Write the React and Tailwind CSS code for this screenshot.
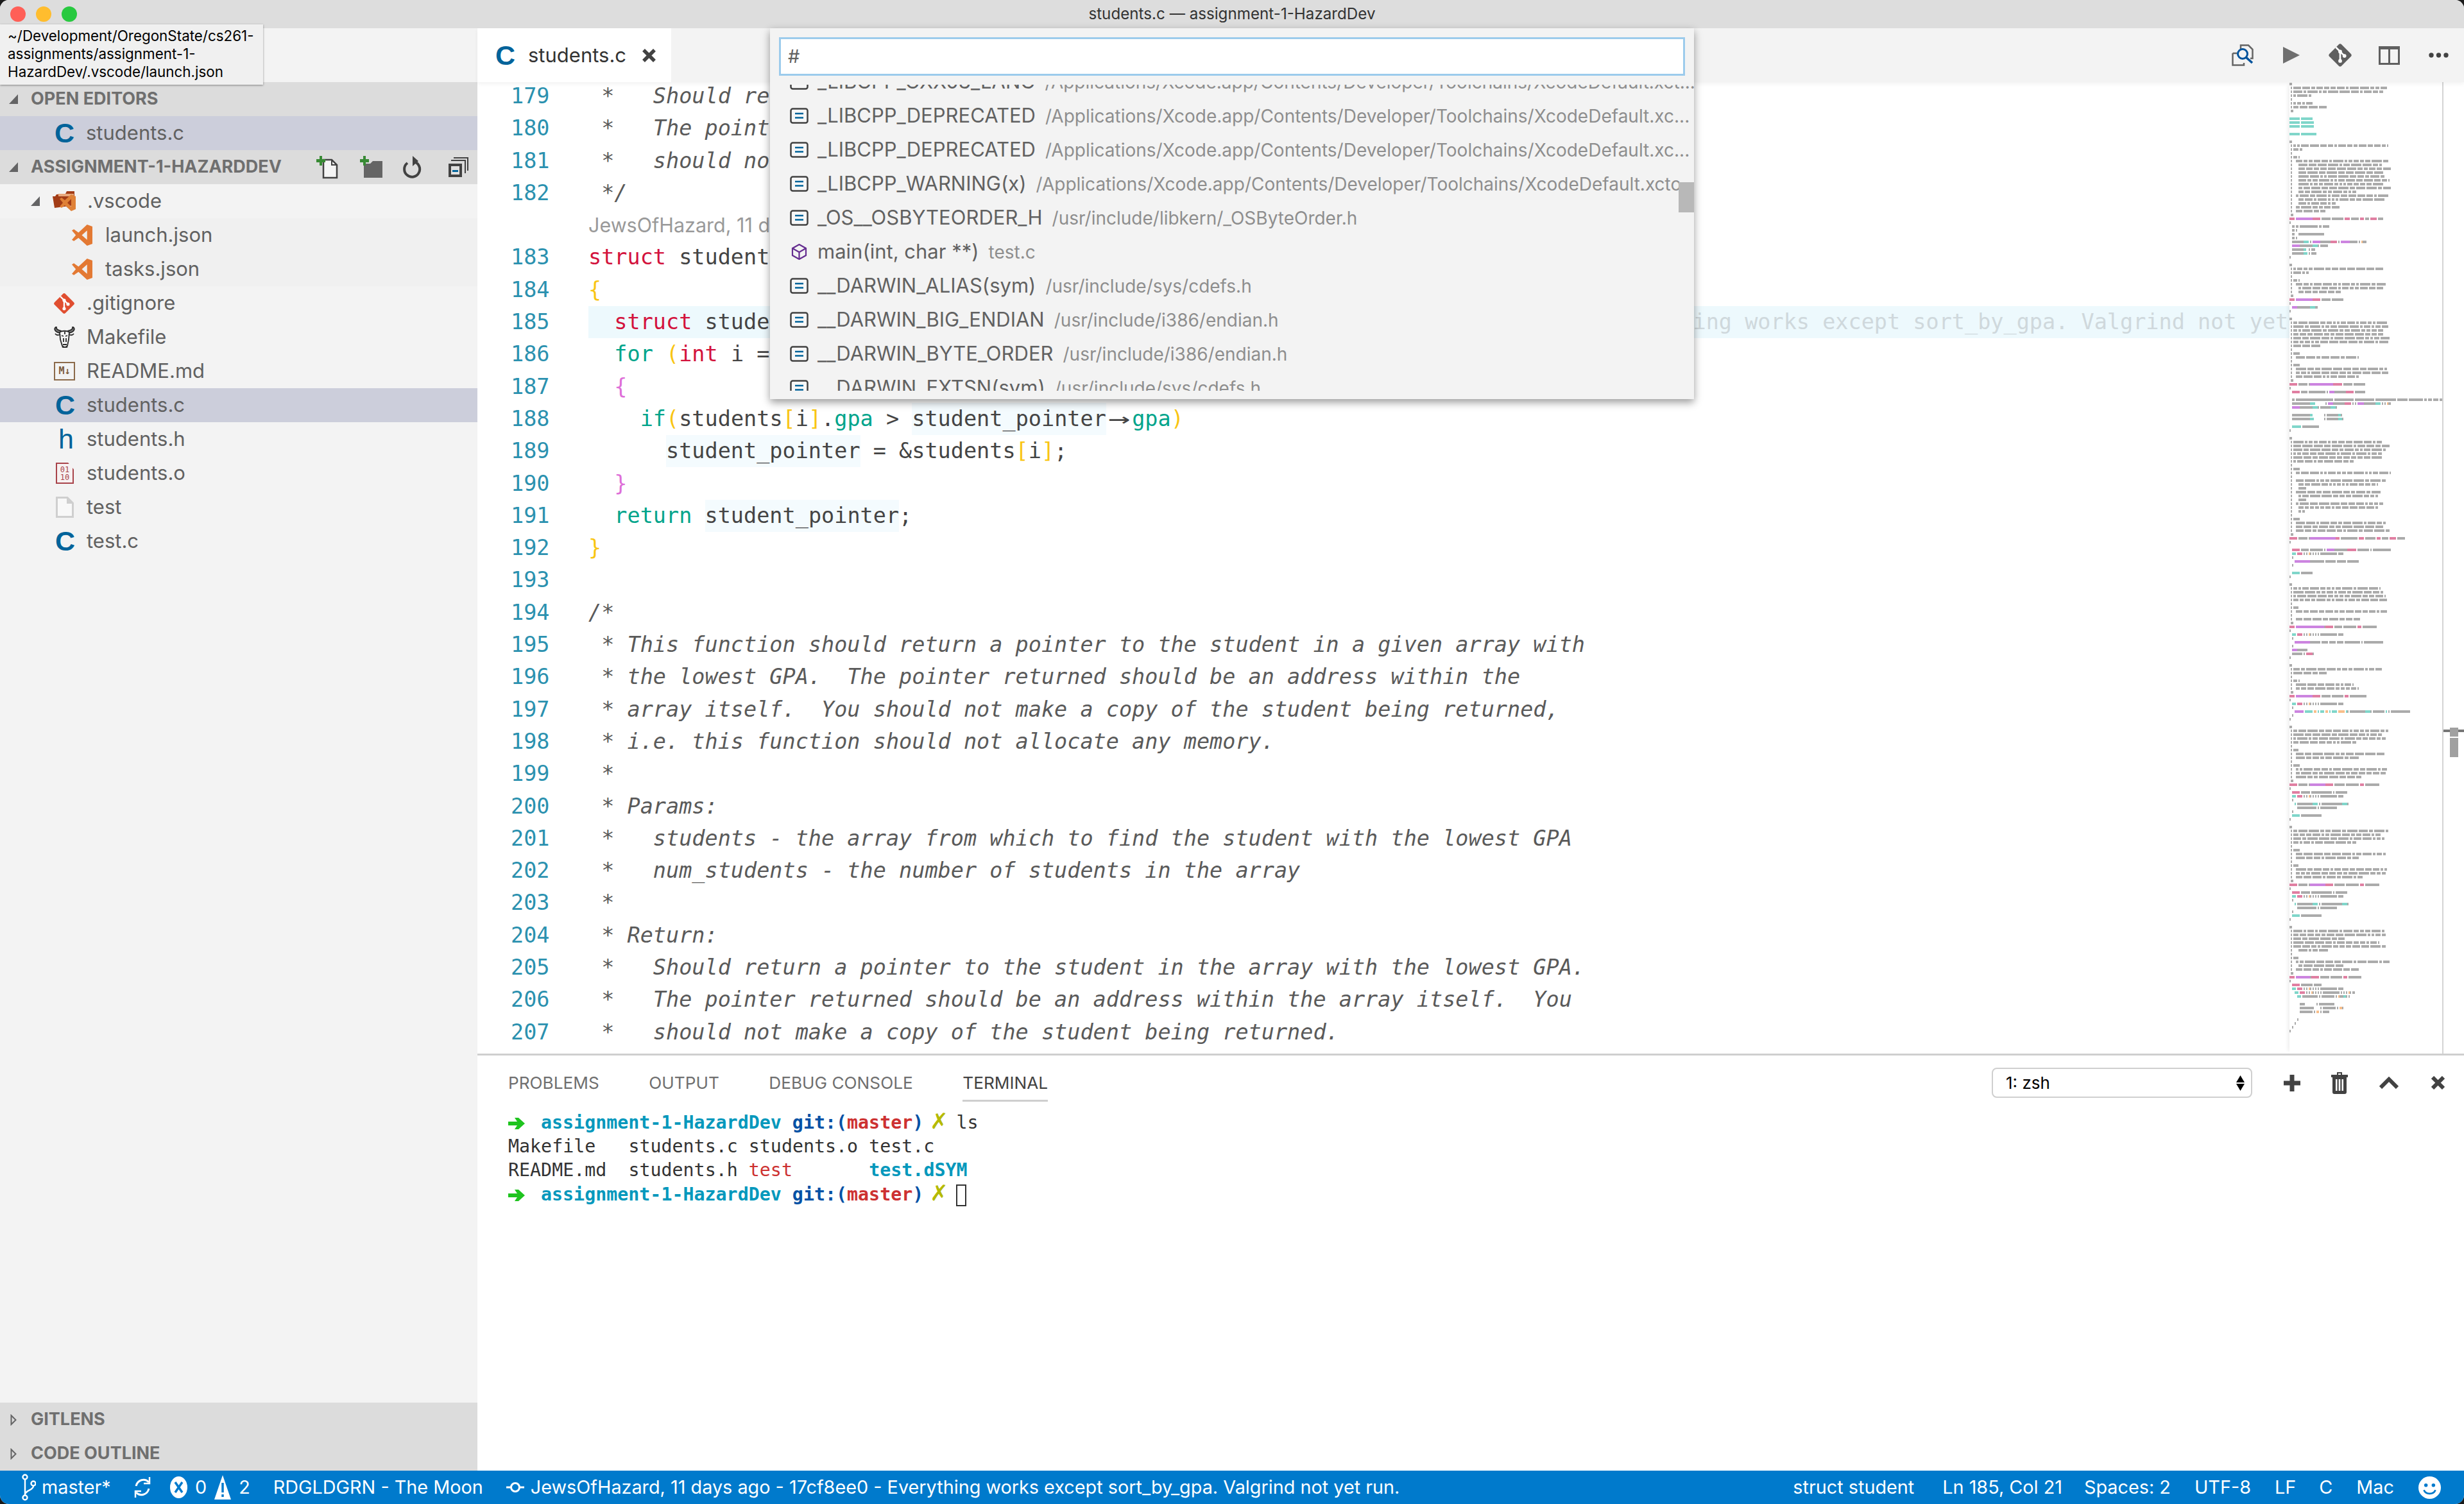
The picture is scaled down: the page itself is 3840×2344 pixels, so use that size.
import React from 'react';

const FORL = '  ttt kkkk # # o# # # # ############# ####';

// minimap rows: # plain, k f t o coloured, cN comment line, cI:N indented comment line
const MINI = [
  '##','c77','c73','c17',' #','c18','c30',' ##','',
  'tttttttt ttttttttt','tttttttt tttttttttt','tttttttt tttttttttt','','tttttttt tttttttttttt','',
  '##','c77','c11',' #','c8','c5:77','c7:72','c7:79','c7:73','c7:74','c7:78','c7:74','c7:79','c7:52','c5:77','c7:75','c7:36','c5:39','c5:28',' ##',
  'kkkk fffffffffffffkkkkkk ####### ######### kkkk ###### kkk ### kkkkk ####','#',
  '  ## ## ############## ## #####','  ## #','  ##   ####################','  ## #',
  '  #########tttt # ffffff########kkkkk # fffffff###### # o###','  ffffff##########tttt# ######','  #########tt  # ###','  #########ttt # ####','#','',
  '##','c73','c16',' #','c8','c5:75','c7:73','c7:40',' ##',
  'kkkk fffffffffffffkkkkkk ####### #########','#','  ffff##########tttt##','#','',
  '##','c77','c78','c73','c74','c79','c78','c24',' #','c8','c5:54',' #','c8','c5:77','c5:77','c5:54',' ##',
  'kkkkkk ####### #ffffffffffffffffffkkkkkkk ####### #########','#',
  '  kkkkkk ##### ############# # ffff#########kkkkkk ########','',
  '  ## ############################# ############### ############### ################ ######## ########### ## ### #### ##### ######',
  '  ##############tttt        # ffff#########kkkkk # # fffff#########tttt # # o##',
  '  ffffff##########tttt# ########tttt#','',
  '  ##############tt         # #########tt#','  ##############ttt        # #########ttt#','',
  '  ttttttt #############','#','',
  '##','c72','c78','c75','c72','c73','c50',' #','c8','c5:79','c7:7','c5:75','c7:69','c7:13','c5:71','c7:69','c7:13','c5:73','c7:69','c7:13',' #','c8','c5:75','c5:73','c5:78',' ##',
  'kkkkkk ####### #ffffffffffffffffffffkkk ############# kkkk ######## kkk ##### kkkkk ######','#','',
  '  kkkkkk ###### ########## # ffffff##########kkkkkkk ######### # ##############',FORL,'  #',
  '    ffffffffffff########### ######## ####### #########','  #','',
  '  tttttt #########','#','',
  '##','c71','c73','c75','c76',' #','c8','c5:76','c7:7','c5:55',' ##',
  'kkkk ffffffffffffffffffffff#kkkkkk ###### ########## kkk ###########','#',FORL,'  #',
  '    ffffffffffff######## ##### ##### ##### ############ # ###############','  #',
  '  ffff########','  ######## # kkkkk#','#','',
  '##','c73','c30',' #','c8','c5:50','c5:54',' ##',
  'kkkk fffffffffffffkkkkkk ####### ######### kkk #############','#',FORL,'  #',
  '    fffffff tttttt oo t ttt oo t tttt ooooo t# ############tttt# ######### t # ###############','  #','#','',
  '##','c77','c72','c75','c52',' #','c8','c5:75','c5:54',' #','c8','c5:76','c5:75','c5:57',' ##',
  'kkkkkk ####### #ffffffffffffkkkkkk ######## ########## kkk ###########','#',
  '  kkkkkk ####### ################ # #########',FORL,'  #',
  '    t ############tttt # ################tttt#','      ############### # #############','  #','  tttttt ################','#','',
  '##','c77','c71','c75','c52',' #','c8','c5:75','c5:54',' #','c8','c5:76','c5:75','c5:57',' ##',
  'kkkkkk ####### #ffffffffffffkkkkkk ######## ########## kkk ###########','#',
  '  kkkkkk ####### ################ # #########',FORL,'  #',
  '    t ############tttt # ################tttt#','      ############### # #############','  #','  tttttt ################','#','',
  '##','c74','c75','c43','c3:70','c3:75','c7:30',' #','c8','c5:78','c7:43','c5:55',' ##',
  'kkkk fffffffffff#kkkkkk ####### ######### kkk ##########','#',
  '  kkkkkk ######### ######',FORL,'    ttt kkkk # # o# # # # ############# # # # o# ##',
  '      ttt ############ # ########## # o###tt# #','',
  '        ####         # ############','        ###########     # ########## # oo#','        ########## # oo # #####','',
  '      #','    #','  #','#',
];

const MINI_COLORS = { '#': '#ababab', k: '#e07fa2', f: '#cc84e0', t: '#80d6ca', o: '#f8bf8b' };

function expandComment(spec, index) {
  const m = spec.match(/^c(?:(\d+):)?(\d+)$/);
  if (!m) return spec;
  const start = m[1] ? Number(m[1]) : 3;
  const len = Number(m[2]);
  let seed = index * 7919 + 17;
  let out = ' #'.padEnd(start, ' ');
  while (out.length < len) {
    seed = (seed * 1103515245 + 12345) & 0x7fffffff;
    const word = 2 + ((seed >> 8) % 7);
    out += '#'.repeat(word) + ' ';
  }
  return out.slice(0, len);
}

function Minimap() {
  const rects = [];
  MINI.forEach((spec, row) => {
    const line = expandComment(spec, row);
    let i = 0;
    while (i < line.length) {
      const ch = line[i];
      let j = i + 1;
      while (j < line.length && line[j] === ch) j++;
      if (ch !== ' ') {
        rects.push(<rect key={row + '-' + i} x={i * 2} y={row * 6 + 1} width={(j - i) * 2} height={4} fill={MINI_COLORS[ch]} />);
      }
      i = j;
    }
  });
  return (
    <svg className="block" width="238" height="1514" viewBox="0 0 238 1514">
      {rects}
    </svg>
  );
}

function CIcon({ className = '' }) {
  return <span className={`font-['Liberation_Sans'] font-bold text-[43px] leading-none text-[#00639a] w-[30px] text-center ${className}`}>C</span>;
}

function VsIcon({ className = 'w-[33px] h-[33px]' }) {
  return (
    <svg className={className} viewBox="0 0 32 32" fill="#e37933">
      <path fillRule="evenodd" d="M23 0 L31 3 V29 L23 32 L10 20 L3 25 L0 23 L6 16 L0 9 L3 7 L10 12 Z M23 9 L15 16 L23 23 Z" />
    </svg>
  );
}

function FolderVs() {
  return (
    <svg className="w-[37px] h-[31px]" viewBox="0 0 37 31">
      <path d="M0 8 L4 8 L6 5 L20 4 L22 0 L34 0 V22 L3 26 Z" fill="#a23c16" />
      <path d="M9 4 H33 V8 H9 Z" fill="#e8a87c" />
      <path fillRule="evenodd" d="M29 5 L36 8 V28 L29 31 L19 22 L14 26 L11 24 L16 18 L11 12 L14 10 L19 14 Z M29 12 L23 18 L29 24 Z" fill="#df8137" />
    </svg>
  );
}

function GitIcon({ color = '#e04e30', className = 'w-[34px] h-[34px]' }) {
  return (
    <svg className={className} viewBox="0 0 34 34">
      <rect x="5" y="5" width="24" height="24" rx="3" transform="rotate(45 17 17)" fill={color} />
      <path d="M11 6 L17 12 M17 12 V25 M17 12 L23 18" stroke="#fff" strokeWidth="2.4" fill="none" />
      <circle cx="17" cy="12" r="2.6" fill="#fff" />
      <circle cx="17" cy="25" r="2.6" fill="#fff" />
      <circle cx="23" cy="18" r="2.6" fill="#fff" />
    </svg>
  );
}

function GnuIcon() {
  return (
    <svg className="w-[33px] h-[33px]" viewBox="0 0 33 33" fill="none" stroke="#2b2b2b" strokeWidth="1.8">
      <path d="M9 10 C1 8 -1 3 4 0 C3 5 8 6 12 7" fill="#777" />
      <path d="M24 10 C32 8 34 3 29 0 C30 5 25 6 21 7" fill="#777" />
      <path d="M9 9 C12 6 21 6 24 9 L23 20 L21 30 C19 33 15 33 13 30 L10 20 Z" fill="#f4f4f4" />
      <path d="M12 14 L15 15 M21 14 L18 15 M14 28 H20 M15 18 V24 M19 18 V24 M17 8 V12" />
      <path d="M2 11 C5 15 8 13 10 12 M31 11 C28 15 25 13 23 12" />
      <path d="M13 31 L17 33 L21 31" strokeWidth="2.6" />
    </svg>
  );
}

function MdIcon() {
  return (
    <div className="w-[33px] h-[29px] border-2 border-[#8b6a4a] flex items-center justify-center font-['DejaVu_Sans_Mono'] font-bold text-[15px] text-[#7a5c3c] leading-none">
      M↓
    </div>
  );
}

function BinIcon() {
  return (
    <div className="relative w-[28px] h-[33px] border-2 border-[#a8434a] bg-[#f7f1f1] flex flex-col items-center justify-center font-['DejaVu_Sans_Mono'] text-[12px] text-[#a8434a] leading-[12px] [clip-path:polygon(0_0,68%_0,100%_32%,100%_100%,0_100%)]">
      <span>01</span>
      <span>10</span>
    </div>
  );
}

function PlainFile() {
  return (
    <svg className="w-[28px] h-[33px]" viewBox="0 0 28 33">
      <path d="M1.5 1.5 H18 L26.5 10 V31.5 H1.5 Z" fill="#f8f8f8" stroke="#cfcfcf" strokeWidth="3" />
      <path d="M18 1.5 V10 H26.5" fill="#cfcfcf" stroke="#cfcfcf" strokeWidth="2" />
    </svg>
  );
}

function Twist({ open = true }) {
  if (!open) {
    return (
      <svg className="w-[10px] h-[18px]" viewBox="0 0 10 18">
        <path d="M1.5 2 L8.5 9 L1.5 16 Z" fill="#dcdcdc" stroke="#646465" strokeWidth="2" />
      </svg>
    );
  }
  return (
    <svg className="w-[14px] h-[15px]" viewBox="0 0 14 15">
      <path d="M14 0 V15 H0 Z" fill="#646465" />
    </svg>
  );
}

function NewFileIcon() {
  return (
    <svg className="w-[36px] h-[36px]" viewBox="0 0 36 36">
      <path d="M12 6 H25 L33 14 V34 H12 Z" fill="#f5f5f5" stroke="#424242" strokeWidth="2.5" />
      <path d="M25 6 V14 H33" fill="none" stroke="#424242" strokeWidth="2" />
      <path d="M6 0 H10 V5 H15 V10 H10 V15 H6 V10 H1 V5 H6 Z" fill="#388a34" />
    </svg>
  );
}

function NewFolderIcon() {
  return (
    <svg className="w-[36px] h-[36px]" viewBox="0 0 36 36">
      <path d="M7 12 H17 L21 8 H36 V34 H7 Z" fill="#656565" />
      <path d="M6 0 H10 V5 H15 V10 H10 V15 H6 V10 H1 V5 H6 Z" fill="#388a34" />
    </svg>
  );
}

function RefreshIcon() {
  return (
    <svg className="w-[30px] h-[36px]" viewBox="0 0 30 36">
      <path d="M17 9 A12 12 0 1 1 7 11" fill="none" stroke="#424242" strokeWidth="4" />
      <path d="M15 0 L24 8 L15 16 Z" fill="#424242" />
    </svg>
  );
}

function CollapseIcon() {
  return (
    <svg className="w-[32px] h-[32px]" viewBox="0 0 32 32" fill="none">
      <path d="M9 1 H31 V21 M5 5 H27 V25" stroke="#424242" strokeWidth="2" />
      <rect x="1" y="10" width="21" height="21" fill="#424242" />
      <rect x="5" y="14" width="13" height="13" fill="#e0e0e0" />
      <rect x="7" y="20" width="9" height="3" fill="#00639a" />
    </svg>
  );
}

function SymbolIcon() {
  return (
    <svg className="w-[29px] h-[25px] shrink-0" viewBox="0 0 29 25" fill="none">
      <rect x="1.5" y="1.5" width="26" height="22" rx="3" stroke="#424242" strokeWidth="2.5" fill="#f7f7f7" />
      <path d="M8 9 H21 M8 15.5 H21" stroke="#00639a" strokeWidth="2.5" />
    </svg>
  );
}

function CubeIcon() {
  return (
    <svg className="w-[25px] h-[25px] ml-[2px] mr-[2px] shrink-0" viewBox="0 0 25 25" fill="none" stroke="#652d90" strokeWidth="2.2">
      <path d="M12.5 1 L23 7 V18 L12.5 24 L2 18 V7 Z" />
      <path d="M2 7 L12.5 13 L23 7 M12.5 13 V24" />
    </svg>
  );
}

function Comment({ children }) {
  return <span className="italic text-[#5a5a5a]">{children}</span>;
}

const RED = 'text-[#d3123c]';
const TEAL = 'text-[#00a48b]';
const YEL = 'text-[#f9c513]';
const PINK = 'text-[#de6fd8]';
const PLAIN = 'text-[#444444]';
const WORD = 'bg-[#f4fbfe] inline-block h-[50px] leading-[50px]';

const CODE = [
  { n: 179, c: <Comment>{' *   Should return a pointer to the student in the array with the lowest GPA.'}</Comment> },
  { n: 180, c: <Comment>{' *   The pointer returned should be an address within the array itself.'}</Comment> },
  { n: 181, c: <Comment>{' *   should not make a copy of the student being returned.'}</Comment> },
  { n: 182, c: <Comment>{' */'}</Comment> },
  { n: '', c: <span className="font-['Inter'] text-[30.5px] text-[#999999]">JewsOfHazard, 11 days ago | 1 author (JewsOfHazard)</span> },
  { n: 183, c: <span className={PLAIN}><span className={RED}>struct</span> student* find_student_by_gpa(struct student* students, int num)</span> },
  { n: 184, c: <span className={YEL}>{'{'}</span> },
  {
    n: 185,
    hl: true,
    c: (
      <span className={PLAIN}>
        {'  '}
        <span className={RED}>struct</span> student* student_pointer = &amp;students[0];
        <span className="ml-[592px] text-[#cfd8dc]">Everything works except sort_by_gpa. Valgrind not yet run.</span>
      </span>
    ),
  },
  { n: 186, c: <span className={PLAIN}>{'  '}<span className={TEAL}>for</span> <span className={YEL}>(</span><span className={RED}>int</span> i = 0; i &lt; num_students; i++<span className={YEL}>)</span></span> },
  { n: 187, c: <span className={PINK}>{'  {'}</span> },
  {
    n: 188,
    c: (
      <span className={PLAIN}>
        {'    '}
        <span className={TEAL}>if</span><span className={YEL}>(</span>students<span className={YEL}>[</span>i<span className={YEL}>]</span>.<span className={TEAL}>gpa</span> &gt; <span className={WORD}>student_pointer</span>
        <span className="inline-block w-[2ch] text-center scale-x-[1.7]">→</span><span className={TEAL}>gpa</span><span className={YEL}>)</span>
      </span>
    ),
  },
  { n: 189, c: <span className={PLAIN}>{'      '}<span className={WORD}>student_pointer</span> = &amp;students<span className={YEL}>[</span>i<span className={YEL}>]</span>;</span> },
  { n: 190, c: <span className={PINK}>{'  }'}</span> },
  { n: 191, c: <span className={PLAIN}>{'  '}<span className={TEAL}>return</span> <span className={WORD}>student_pointer</span>;</span> },
  { n: 192, c: <span className={YEL}>{'}'}</span> },
  { n: 193, c: '' },
  { n: 194, c: <Comment>{'/*'}</Comment> },
  { n: 195, c: <Comment>{' * This function should return a pointer to the student in a given array with'}</Comment> },
  { n: 196, c: <Comment>{' * the lowest GPA.  The pointer returned should be an address within the'}</Comment> },
  { n: 197, c: <Comment>{' * array itself.  You should not make a copy of the student being returned,'}</Comment> },
  { n: 198, c: <Comment>{' * i.e. this function should not allocate any memory.'}</Comment> },
  { n: 199, c: <Comment>{' *'}</Comment> },
  { n: 200, c: <Comment>{' * Params:'}</Comment> },
  { n: 201, c: <Comment>{' *   students - the array from which to find the student with the lowest GPA'}</Comment> },
  { n: 202, c: <Comment>{' *   num_students - the number of students in the array'}</Comment> },
  { n: 203, c: <Comment>{' *'}</Comment> },
  { n: 204, c: <Comment>{' * Return:'}</Comment> },
  { n: 205, c: <Comment>{' *   Should return a pointer to the student in the array with the lowest GPA.'}</Comment> },
  { n: 206, c: <Comment>{' *   The pointer returned should be an address within the array itself.  You'}</Comment> },
  { n: 207, c: <Comment>{' *   should not make a copy of the student being returned.'}</Comment> },
];

const XCODE = '/Applications/Xcode.app/Contents/Developer/Toolchains/XcodeDefault.';
const PICKS = [
  { label: '_LIBCPP_CXX03_LANG', desc: XCODE + 'xct...' },
  { label: '_LIBCPP_DEPRECATED', desc: XCODE + 'xc...' },
  { label: '_LIBCPP_DEPRECATED', desc: XCODE + 'xc...' },
  { label: '_LIBCPP_WARNING(x)', desc: XCODE + 'xcto...' },
  { label: '_OS__OSBYTEORDER_H', desc: '/usr/include/libkern/_OSByteOrder.h' },
  { label: 'main(int, char **)', desc: 'test.c', fn: true },
  { label: '__DARWIN_ALIAS(sym)', desc: '/usr/include/sys/cdefs.h' },
  { label: '__DARWIN_BIG_ENDIAN', desc: '/usr/include/i386/endian.h' },
  { label: '__DARWIN_BYTE_ORDER', desc: '/usr/include/i386/endian.h' },
  { label: '__DARWIN_EXTSN(sym)', desc: '/usr/include/sys/cdefs.h' },
];

function SideHeader({ open = true, children, right }) {
  return (
    <div className="h-[53px] bg-[#dcdcdc] flex items-center shrink-0">
      <div className="w-[48px] flex justify-center pr-[6px]">
        <Twist open={open} />
      </div>
      <span className="text-[27px] font-bold text-[#6f6f6f]">{children}</span>
      {right}
    </div>
  );
}

function TreeRow({ icon, label, indent = 85, labelX = 134, active, tint }) {
  return (
    <div className={`h-[53px] flex items-center text-[31px] text-[#616161] ${active ? 'bg-[#cccedb]' : tint ? 'bg-[#f0f0f0]' : ''}`}>
      <div className="shrink-0 flex items-center" style={{ width: labelX, paddingLeft: indent }}>
        {icon}
      </div>
      <span>{label}</span>
    </div>
  );
}

function Sidebar() {
  return (
    <div className="w-[744px] shrink-0 flex flex-col bg-[#f3f3f3]">
      <div className="h-[84px] shrink-0" />
      <SideHeader>OPEN EDITORS</SideHeader>
      <TreeRow active icon={<CIcon />} label="students.c" />
      <SideHeader
        right={
          <div className="ml-[53px] flex items-center">
            <NewFileIcon />
            <div className="ml-[32px]"><NewFolderIcon /></div>
            <div className="ml-[32px]"><RefreshIcon /></div>
            <div className="ml-[40px]"><CollapseIcon /></div>
          </div>
        }
      >
        ASSIGNMENT-1-HAZARDDEV
      </SideHeader>
      <div className="h-[53px] flex items-center text-[31px] text-[#616161]">
        <div className="ml-[48px] w-[34px]"><Twist /></div>
        <FolderVs />
        <span className="ml-[17px]">.vscode</span>
      </div>
      <TreeRow tint icon={<VsIcon />} label="launch.json" indent={112} labelX={164} />
      <TreeRow tint icon={<VsIcon />} label="tasks.json" indent={112} labelX={164} />
      <TreeRow icon={<GitIcon />} label=".gitignore" indent={83} labelX={135} />
      <TreeRow icon={<GnuIcon />} label="Makefile" indent={84} labelX={135} />
      <TreeRow icon={<MdIcon />} label="README.md" indent={84} labelX={135} />
      <TreeRow active icon={<CIcon />} label="students.c" indent={86} labelX={135} />
      <TreeRow
        icon={<span className="font-['Liberation_Sans'] text-[43px] leading-none text-[#00639a] pl-[5px]">h</span>}
        label="students.h"
        indent={86}
        labelX={135}
      />
      <TreeRow icon={<BinIcon />} label="students.o" indent={87} labelX={135} />
      <TreeRow icon={<PlainFile />} label="test" indent={87} labelX={135} />
      <TreeRow icon={<CIcon />} label="test.c" indent={86} labelX={135} />
      <div className="flex-1" />
      <SideHeader open={false}>GITLENS</SideHeader>
      <SideHeader open={false}>CODE OUTLINE</SideHeader>
    </div>
  );
}

function TabActions() {
  return (
    <div className="flex items-center pr-[24px]">
      <svg className="w-[34px] h-[34px]" viewBox="0 0 34 34" fill="none">
        <path d="M1.5 14 H8 M1.5 14 V32.5 H19 V29 M14 9 V1.5 H26 L32.5 8 V22 H29" stroke="#656565" strokeWidth="2.5" />
        <circle cx="17" cy="15" r="7.5" stroke="#00539c" strokeWidth="3" fill="#f3f3f3" />
        <path d="M22 20 L32 29" stroke="#00539c" strokeWidth="3.5" />
      </svg>
      <svg className="ml-[45px] w-[28px] h-[28px]" viewBox="0 0 28 28">
        <path d="M1 1 L27 14 L1 27 Z" fill="#6f6f6f" />
      </svg>
      <div className="ml-[43px]"><GitIcon color="#5f5f5f" className="w-[38px] h-[38px]" /></div>
      <svg className="ml-[41px] w-[33px] h-[29px]" viewBox="0 0 33 29">
        <rect width="33" height="29" fill="#5f5f5f" />
        <rect x="3" y="5" width="12" height="21" fill="#f3f3f3" />
        <rect x="18" y="5" width="12" height="21" fill="#f3f3f3" />
      </svg>
      <svg className="ml-[45px] w-[31px] h-[8px]" viewBox="0 0 31 8" fill="#424242">
        <circle cx="4" cy="4" r="3.7" />
        <circle cx="15.5" cy="4" r="3.7" />
        <circle cx="27" cy="4" r="3.7" />
      </svg>
    </div>
  );
}

function Editor() {
  return (
    <div className="flex-1 min-h-0 flex overflow-hidden relative">
      <div className="w-[2824px] shrink-0 overflow-hidden font-['DejaVu_Sans_Mono'] text-[33.5px] whitespace-pre">
        <div className="-mt-[3px]">
          {CODE.map((line, i) => (
            <div key={i} className="h-[50.3px] leading-[50.3px] flex">
              <div className="w-[110px] ml-[52px] shrink-0 text-[#2b91af]">{line.n}</div>
              <div className={`ml-[11px] flex-1 ${line.hl ? 'bg-[#edf9fd]' : ''}`}>{line.c}</div>
            </div>
          ))}
        </div>
      </div>
      <div className="w-[238px] shrink-0 shadow-[-6px_0_6px_-4px_rgba(0,0,0,0.08)] bg-white">
        <Minimap />
      </div>
      <div className="flex-1 border-l-2 border-[#d4d4d4] relative">
        <div className="absolute left-0 right-0 top-[1009px] h-[4px] bg-[#777777]" />
        <div className="absolute left-[10px] w-[13px] top-[1006px] h-[14px] bg-[#a0a0a0]" />
        <div className="absolute left-[10px] w-[13px] top-[1022px] h-[30px] bg-[#a0a0a0]" />
      </div>
    </div>
  );
}

function Panel() {
  const tab = 'text-[26.2px] leading-[34px] pb-[9px] border-b-[3px]';
  return (
    <div className="h-[650px] shrink-0 border-t-[3px] border-[#cfcfcf] bg-white flex flex-col">
      <div className="h-[85px] shrink-0 flex justify-between items-start">
        <div className="flex gap-[77.5px] pl-[48px] pt-[26px]">
          <span className={`${tab} border-transparent text-[#6f6f6f]`}>PROBLEMS</span>
          <span className={`${tab} border-transparent text-[#6f6f6f]`}>OUTPUT</span>
          <span className={`${tab} border-transparent text-[#6f6f6f]`}>DEBUG CONSOLE</span>
          <span className={`${tab} border-[#cfcfcf] text-[#424242]`}>TERMINAL</span>
        </div>
        <div className="flex items-center pr-[30px] mt-[19px]">
          <div className="w-[406px] h-[47px] border-2 border-[#cfcfcf] rounded-[8px] flex items-center justify-between pl-[20px] pr-[10px] text-[26px] text-black">
            <span>1: zsh</span>
            <div className="flex flex-col gap-[2px] text-[#111]">
              <svg className="w-[13px] h-[11px]" viewBox="0 0 13 11"><path d="M6.5 0 L13 11 H0 Z" /></svg>
              <svg className="w-[13px] h-[11px]" viewBox="0 0 13 11"><path d="M6.5 11 L13 0 H0 Z" /></svg>
            </div>
          </div>
          <svg className="ml-[49px] w-[26px] h-[26px]" viewBox="0 0 26 26" fill="#424242">
            <path d="M9.5 0 H16.5 V9.5 H26 V16.5 H16.5 V26 H9.5 V16.5 H0 V9.5 H9.5 Z" />
          </svg>
          <svg className="ml-[48px] w-[26px] h-[34px]" viewBox="0 0 26 34" fill="#424242">
            <path fillRule="evenodd" d="M9 0 H17 V4 H26 V8 H24 V31 Q24 34 21 34 H5 Q2 34 2 31 V8 H0 V4 H9 Z M11 2 V4 H15 V2 Z M7 11 V29 H9.5 V11 Z M11.7 11 V29 H14.3 V11 Z M16.5 11 V29 H19 V11 Z" />
          </svg>
          <svg className="ml-[49px] w-[30px] h-[19px]" viewBox="0 0 30 19" fill="none" stroke="#424242" strokeWidth="6">
            <path d="M2 17 L15 4 L28 17" />
          </svg>
          <svg className="ml-[51px] w-[21px] h-[21px]" viewBox="0 0 21 21" fill="none" stroke="#424242" strokeWidth="6">
            <path d="M2 2 L19 19 M19 2 L2 19" />
          </svg>
        </div>
      </div>
      <div className="pl-[48px] font-['DejaVu_Sans_Mono'] text-[28.3px] leading-[37px] whitespace-pre text-[#333333]">
        <Prompt><span> ls</span></Prompt>
        <div>Makefile   students.c students.o test.c</div>
        <div>README.md  students.h <span className="text-[#cd3131]">test</span>       <span className="text-[#0598bc] font-bold">test.dSYM</span></div>
        <Prompt> <span className="inline-block w-[16px] h-[34px] border-2 border-[#333333] align-middle" /></Prompt>
      </div>
    </div>
  );
}

function Prompt({ children }) {
  return (
    <div className="font-bold">
      <svg className="inline-block w-[26px] h-[18px] mr-[25px] align-[-1px]" viewBox="0 0 26 18" fill="#1fc41f">
        <path d="M0 6 H14 L10 0 H16 L26 9 L16 18 H10 L14 12 H0 Z" />
      </svg>
      <span className="text-[#0598bc]">assignment-1-HazardDev</span>{' '}
      <span className="text-[#0451a5]">git:(</span>
      <span className="text-[#cd3131]">master</span>
      <span className="text-[#0451a5]">)</span>{' '}
      <span className="inline-block w-[17px] -translate-x-[7px] text-[34px] leading-none font-['DejaVu_Sans'] text-[#b5ba00]">✗</span>
      <span className="font-normal">{children}</span>
    </div>
  );
}

function StatusBar() {
  return (
    <div className="h-[52px] shrink-0 bg-[#007acc] text-white text-[28.8px] flex items-center whitespace-nowrap">
      <svg className="ml-[34px] w-[22px] h-[44px]" viewBox="0 0 22 44" fill="none" stroke="#fff" strokeWidth="2.4">
        <circle cx="5" cy="6" r="3.5" />
        <circle cx="5" cy="38" r="3.5" />
        <circle cx="18" cy="16" r="3.5" />
        <path d="M5 10 V34 M18 20 C18 26 8 26 5 32" />
      </svg>
      <span className="ml-[9px] w-[107px]">master*</span>
      <svg className="ml-[37px] w-[26px] h-[36px]" viewBox="0 0 26 36" fill="none" stroke="#fff" strokeWidth="3">
        <path d="M23 10 A12 13 0 0 0 3 16 M3 26 A12 13 0 0 0 23 20" />
        <path d="M24 2 V12 H15 M2 34 V24 H11" strokeWidth="2.5" />
      </svg>
      <svg className="ml-[30px] w-[27px] h-[36px]" viewBox="0 0 27 36">
        <ellipse cx="13.5" cy="18" rx="13.5" ry="17" fill="#fff" />
        <path d="M8 10 L19 26 M19 10 L8 26" stroke="#007acc" strokeWidth="3.5" />
      </svg>
      <span className="ml-[12px]">0</span>
      <svg className="ml-[12px] w-[26px] h-[38px]" viewBox="0 0 26 38">
        <path d="M13 0 L26 38 H0 Z" fill="#fff" />
        <path d="M13 12 V27 M13 30 V34" stroke="#007acc" strokeWidth="3.5" />
      </svg>
      <span className="ml-[12px]">2</span>
      <span className="ml-[36px]">RDGLDGRN - The Moon</span>
      <svg className="ml-[36px] w-[28px] h-[20px]" viewBox="0 0 28 20" fill="none" stroke="#fff" strokeWidth="3">
        <circle cx="14" cy="10" r="6.5" />
        <path d="M0 10 H7 M21 10 H28" />
      </svg>
      <span className="ml-[10px]">JewsOfHazard, 11 days ago - 17cf8ee0 - Everything works except sort_by_gpa. Valgrind not yet run.</span>
      <div className="flex-1" />
      <span>struct student</span>
      <span className="ml-[44px]">Ln 185, Col 21</span>
      <span className="ml-[34px]">Spaces: 2</span>
      <span className="ml-[37px]">UTF-8</span>
      <span className="ml-[37px]">LF</span>
      <span className="ml-[36px]">C</span>
      <span className="ml-[37px]">Mac</span>
      <svg className="ml-[38px] mr-[36px] w-[35px] h-[35px]" viewBox="0 0 33 33">
        <circle cx="16.5" cy="16.5" r="16.5" fill="#fff" />
        <circle cx="11" cy="13" r="2.6" fill="#007acc" />
        <circle cx="22" cy="13" r="2.6" fill="#007acc" />
        <path d="M8 20 C11 27 22 27 25 20" stroke="#007acc" strokeWidth="2.6" fill="none" />
      </svg>
    </div>
  );
}

function QuickOpen() {
  return (
    <div className="absolute z-20 left-[1200px] top-[44px] w-[1440px] h-[578px] bg-[#f3f3f3] shadow-[0_5px_12px_rgba(0,0,0,0.4)] flex flex-col">
      <div className="mx-[14px] mt-[14px] h-[60px] shrink-0 border-[3px] border-[#9ccbec] bg-white flex items-center pl-[11px] text-[29px] text-[#616161]">
        #
      </div>
      <div className="mt-[14px] h-[477px] overflow-hidden relative">
        <div className="-mt-[31px]">
          {PICKS.map((p, i) => (
            <div key={i} className="h-[53px] flex items-center pl-[31px] whitespace-nowrap">
              {p.fn ? <CubeIcon /> : <SymbolIcon />}
              <span className="ml-[14px] text-[31px] text-[#616161]">{p.label}</span>
              <span className="ml-[15px] text-[28px] text-[#8e8e8e]">{p.desc}</span>
            </div>
          ))}
        </div>
        <div className="absolute right-0 top-[152px] w-[24px] h-[47px] bg-[#b8b8b8]" />
      </div>
    </div>
  );
}

export default function App() {
  return (
    <div className="relative w-[3840px] h-[2344px] bg-[#1a1a1a] overflow-hidden font-['Inter',sans-serif]">
      <div className="h-full rounded-[14px] overflow-hidden flex flex-col bg-white">
        <div className="h-[44px] shrink-0 bg-[#dddddd] flex items-center justify-center relative text-[24.2px] text-[#333333]">
          <div className="absolute left-[16px] top-[10px] flex gap-[16px]">
            <div className="w-[24px] h-[24px] rounded-full bg-[#ff5f57]" />
            <div className="w-[24px] h-[24px] rounded-full bg-[#ffbd2e]" />
            <div className="w-[24px] h-[24px] rounded-full bg-[#28c940]" />
          </div>
          students.c — assignment-1-HazardDev
        </div>
        <div className="flex-1 min-h-0 flex">
          <Sidebar />
          <div className="flex-1 min-w-0 flex flex-col">
            <div className="h-[84px] shrink-0 bg-[#f3f3f3] flex items-center justify-between relative z-10 shadow-[0_3px_6px_rgba(0,0,0,0.05)]">
              <div className="w-[302px] h-full bg-white flex items-center pl-[28px]">
                <CIcon />
                <span className="ml-[21px] text-[31px] text-[#333333]">students.c</span>
                <svg className="ml-[25px] w-[21px] h-[21px]" viewBox="0 0 21 21" fill="none" stroke="#424242" strokeWidth="5.5">
                  <path d="M2 2 L19 19 M19 2 L2 19" />
                </svg>
              </div>
              <TabActions />
            </div>
            <Editor />
            <Panel />
          </div>
        </div>
        <StatusBar />
      </div>
      <QuickOpen />
      <div className="absolute z-30 left-0 top-[38px] w-[410px] h-[94px] bg-[#f0f0f0] shadow-[0_1px_3px_rgba(0,0,0,0.4)] px-[12px] pt-[4px] text-[22.4px] leading-[28px] text-black">
        ~/Development/OregonState/cs261-
        <br />
        assignments/assignment-1-
        <br />
        HazardDev/.vscode/launch.json
      </div>
    </div>
  );
}
